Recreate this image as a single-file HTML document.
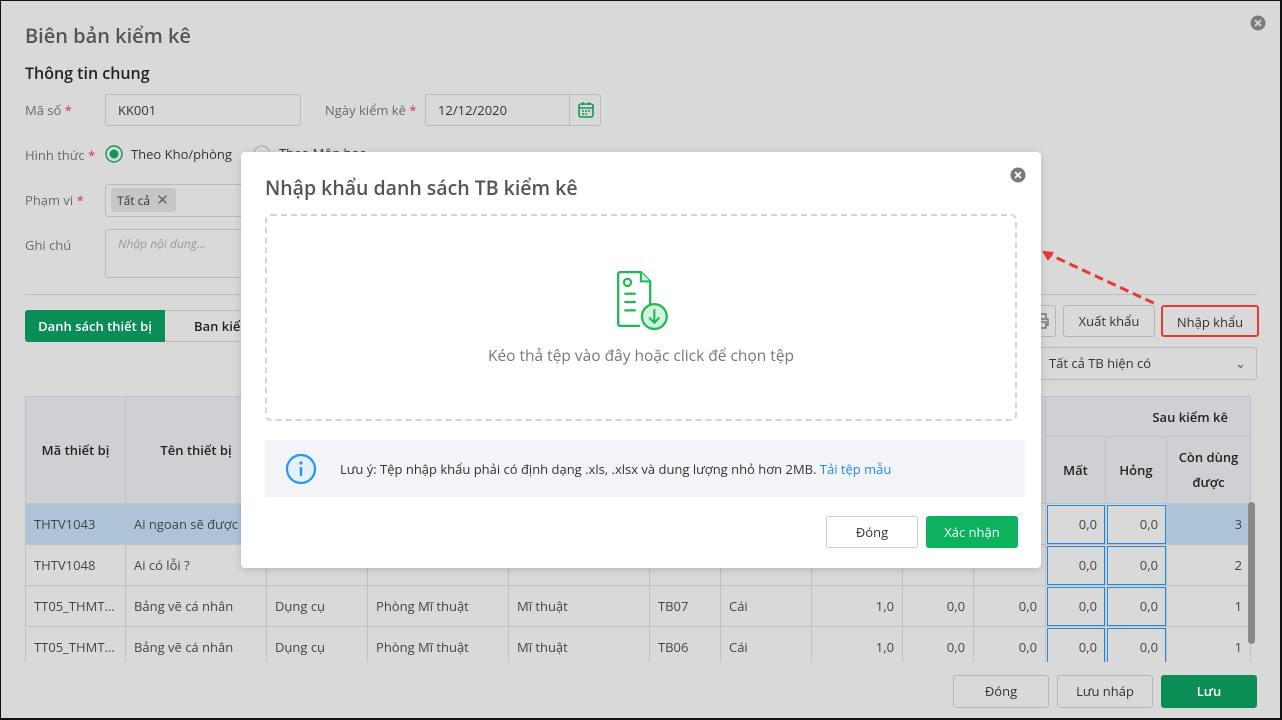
<!DOCTYPE html>
<html><head><meta charset="utf-8"><style>
*{box-sizing:border-box;margin:0;padding:0}
body{width:1282px;height:720px;overflow:hidden;background:#d9d9d9;font-family:"Open Sans","Liberation Sans","DejaVu Sans",sans-serif;font-size:13px;color:#333;position:relative}
.frame{position:absolute;left:0;top:0;width:1282px;height:720px;border:1px solid #111;border-right:2px solid #111;border-bottom:2px solid #111;pointer-events:none;z-index:50}
.a{position:absolute}
.lbl{color:#6a6a6a;font-size:13px}
.req{color:#d33}
.inp{position:absolute;border:1px solid #b9b9b9;border-radius:3px;background:#d9d9d9;padding:0 12px;line-height:30px;color:#333}
.btn{position:absolute;border:1px solid #b5b5b5;border-radius:3px;background:#d9d9d9;text-align:center;color:#333;font-size:13px}
table{border-collapse:collapse;position:absolute;left:25px;top:396px;table-layout:fixed}
td,th{border:1px solid #bfc1c9;padding:0 8px;height:41px;white-space:nowrap;overflow:hidden;font-size:13px}
th{background:#cfd0d4;font-weight:600;color:#222;text-align:center}
td{background:#d9d9d9;color:#444}
.num{text-align:right}
.blue{outline:1.5px solid #1e88e5;outline-offset:-2px}
</style></head><body>
<div class="frame"></div>

<div class="a" style="left:25px;top:22px;font-size:20px;font-weight:600;color:#555">Biên bản kiểm kê</div>
<div class="a" style="left:25px;top:62px;font-size:16px;font-weight:600;color:#222">Thông tin chung</div>
<svg class="a" style="left:1250px;top:15px" width="16" height="16"><circle cx="8" cy="8" r="7.5" fill="#7b7b7b"/><path d="M5 5L11 11M11 5L5 11" stroke="#d9d9d9" stroke-width="1.8"/></svg>

<div class="a lbl" style="left:25px;top:101px">Mã số <span class="req">*</span></div>
<div class="inp" style="left:105px;top:94px;width:196px;height:32px">KK001</div>
<div class="a lbl" style="left:325px;top:101px">Ngày kiểm kê <span class="req">*</span></div>
<div class="inp" style="left:425px;top:94px;width:176px;height:32px">12/12/2020</div>
<div class="a" style="left:569px;top:95px;width:1px;height:30px;background:#b9b9b9"></div>
<svg class="a" style="left:577px;top:101px" width="18" height="18"><rect x="2" y="3" width="14" height="13" rx="2" fill="none" stroke="#14955a" stroke-width="1.6"/><path d="M2 7H16M6 1V4M12 1V4M5 10H7M8 10H10M11 10H13M5 13H7M8 13H10" stroke="#14955a" stroke-width="1.4"/></svg>

<div class="a lbl" style="left:25px;top:146px">Hình thức <span class="req">*</span></div>
<svg class="a" style="left:105px;top:145px" width="18" height="18"><circle cx="9" cy="9" r="8" fill="none" stroke="#14955a" stroke-width="1.4"/><circle cx="9" cy="9" r="4.5" fill="#14955a"/></svg>
<div class="a" style="left:131px;top:145px;color:#333">Theo Kho/phòng</div>
<svg class="a" style="left:253px;top:145px" width="18" height="18"><circle cx="9" cy="9" r="8" fill="none" stroke="#aaa" stroke-width="1.2"/></svg>
<div class="a" style="left:279px;top:144px;color:#333">Theo Môn học</div>

<div class="a lbl" style="left:25px;top:191px">Phạm vi <span class="req">*</span></div>
<div class="inp" style="left:105px;top:184px;width:200px;height:33px"></div>
<div class="a" style="left:111px;top:188px;width:65px;height:24px;background:#c6c6c6;border-radius:3px;font-size:12px;line-height:24px;padding-left:6px;color:#333">Tất cả <span style="font-size:15px;color:#666;margin-left:3px">✕</span></div>
<div class="a lbl" style="left:25px;top:236px">Ghi chú</div>
<div class="inp" style="left:105px;top:229px;width:200px;height:49px;font-style:italic;color:#999;font-size:12px;line-height:28px">Nhập nội dung...</div>
<div class="a" style="left:25px;top:294px;width:1232px;height:1px;background:#bbb"></div>

<div class="a" style="left:25px;top:310px;width:140px;height:32px;background:#0b8e55;border-radius:3px 0 0 3px;color:#fff;font-weight:600;line-height:32px;text-align:center">Danh sách thiết bị</div>
<div class="a" style="left:165px;top:310px;width:120px;height:32px;border:1px solid #bbb;border-left:none;line-height:30px;padding-left:29px;color:#222;font-weight:600">Ban kiểm kê</div>

<div class="btn" style="left:1030px;top:305px;width:26px;height:32px"></div>
<svg class="a" style="left:1034px;top:312px" width="18" height="18"><path d="M5 6V2H12V6M4 13H2V7H14V13H12M5 10H12V16H5Z" fill="none" stroke="#777" stroke-width="1.4"/></svg>
<div class="btn" style="left:1063px;top:305px;width:92px;height:32px;line-height:30px">Xuất khẩu</div>
<div class="btn" style="left:1161px;top:305px;width:98px;height:32px;line-height:30px;border:2px solid #e53935">Nhập khẩu</div>
<div class="inp" style="left:1036px;top:347px;width:221px;height:33px;line-height:31px">Tất cả TB hiện có<span style="position:absolute;right:10px;top:0;color:#555">⌄</span></div>
<svg class="a" style="left:1040px;top:248px" width="125" height="62"><path d="M4 4L118 57" stroke="#e53935" stroke-width="3" stroke-dasharray="9 5"/><path d="M2 3L14 4L8 13Z" fill="#e53935"/></svg>

<table>
<colgroup><col style="width:100px"><col style="width:141px"><col style="width:101px"><col style="width:141px"><col style="width:141px"><col style="width:71px"><col style="width:91px"><col style="width:91px"><col style="width:71px"><col style="width:72px"><col style="width:60px"><col style="width:61px"><col style="width:84px"></colgroup>
<tr><th rowspan="2" style="height:107px">Mã thiết bị</th><th rowspan="2">Tên thiết bị</th><th rowspan="2"></th><th rowspan="2"></th><th rowspan="2"></th><th rowspan="2"></th><th rowspan="2"></th><th rowspan="2"></th><th rowspan="2"></th><th rowspan="2"></th><th colspan="3" style="height:40px;text-align:right;padding-right:22px;font-weight:600">Sau kiểm kê</th></tr>
<tr><th style="height:66px">Mất</th><th>Hỏng</th><th style="line-height:25px">Còn dùng<br>được</th></tr>
<tr><td style="background:#acc3d8">THTV1043</td><td style="background:#acc3d8">Ai ngoan sẽ được</td><td></td><td></td><td></td><td></td><td></td><td></td><td></td><td></td><td class="num blue">0,0</td><td class="num blue">0,0</td><td class="num" style="background:#acc3d8">3</td></tr>
<tr><td>THTV1048</td><td>Ai có lỗi ?</td><td></td><td></td><td></td><td></td><td></td><td></td><td></td><td></td><td class="num blue">0,0</td><td class="num blue">0,0</td><td class="num">2</td></tr>
<tr><td>TT05_THMT...</td><td>Bảng vẽ cá nhân</td><td>Dụng cụ</td><td>Phòng Mĩ thuật</td><td>Mĩ thuật</td><td>TB07</td><td>Cái</td><td class="num">1,0</td><td class="num">0,0</td><td class="num">0,0</td><td class="num blue">0,0</td><td class="num blue">0,0</td><td class="num">1</td></tr>
<tr><td style="height:38px">TT05_THMT...</td><td>Bảng vẽ cá nhân</td><td>Dụng cụ</td><td>Phòng Mĩ thuật</td><td>Mĩ thuật</td><td>TB06</td><td>Cái</td><td class="num">1,0</td><td class="num">0,0</td><td class="num">0,0</td><td class="num blue">0,0</td><td class="num blue">0,0</td><td class="num">1</td></tr>
</table>
<div class="a" style="left:1248px;top:502px;width:7px;height:142px;background:#8a8a8a;border-radius:4px"></div>
<div class="a" style="left:0;top:662px;width:1282px;height:58px;background:#d9d9d9"></div>

<div class="btn" style="left:953px;top:675px;width:96px;height:33px;line-height:31px">Đóng</div>
<div class="btn" style="left:1057px;top:675px;width:96px;height:33px;line-height:31px">Lưu nháp</div>
<div class="btn" style="left:1161px;top:675px;width:96px;height:33px;line-height:31px;background:#0b8e55;border-color:#0b8e55;color:#fff;font-weight:600">Lưu</div>

<!-- dialog -->
<div class="a" style="left:241px;top:152px;width:800px;height:416px;background:#fff;border-radius:4px;box-shadow:0 2px 8px rgba(0,0,0,.15)">
 <div class="a" style="left:24px;top:22px;font-size:19.5px;font-weight:600;color:#555">Nhập khẩu danh sách TB kiểm kê</div>
 <svg class="a" style="left:769px;top:15px" width="16" height="16"><circle cx="8" cy="8" r="7.5" fill="#7b7b7b"/><path d="M5 5L11 11M11 5L5 11" stroke="#fff" stroke-width="1.8"/></svg>
 <div class="a" style="left:24px;top:62px;width:752px;height:207px;border:2px dashed #d4d4d4;border-radius:6px"></div>
 <svg class="a" style="left:374px;top:117px" width="58" height="62" viewBox="0 0 56 60">
  <path d="M5 3H25L34 12V34M5 3Q3 3 3 5V53Q3 55 5 55H24" fill="none" stroke="#1db954" stroke-width="2.2"/>
  <path d="M25 3V12H34" fill="#d6f1e0" stroke="#1db954" stroke-width="2"/>
  <circle cx="12" cy="13" r="3.5" fill="none" stroke="#1db954" stroke-width="2"/>
  <path d="M9 24H20M9 32H20M9 40H20" stroke="#1db954" stroke-width="2.2"/>
  <circle cx="38" cy="46" r="12" fill="#d6f1e0" stroke="#1db954" stroke-width="2.2"/>
  <path d="M38 39V52M33 47L38 52L43 47" fill="none" stroke="#1db954" stroke-width="2"/>
 </svg>
 <div class="a" style="left:0;width:800px;top:192px;text-align:center;font-size:15.5px;color:#777">Kéo thả tệp vào đây hoặc click để chọn tệp</div>
 <div class="a" style="left:24px;top:288px;width:760px;height:57px;background:#f3f4f8"></div>
 <svg class="a" style="left:43px;top:300px" width="34" height="34"><circle cx="17" cy="17" r="14" fill="#e3f1fd" stroke="#2196f3" stroke-width="2.2"/><circle cx="17" cy="11" r="1.6" fill="#2196f3"/><path d="M17 15V24" stroke="#2196f3" stroke-width="2.4"/></svg>
 <div class="a" style="left:99px;top:308px;font-size:13px;color:#333">Lưu ý: Tệp nhập khẩu phải có định dạng .xls, .xlsx và dung lượng nhỏ hơn 2MB. <span style="color:#1e88e5">Tải tệp mẫu</span></div>
 <div class="btn" style="left:585px;top:364px;width:92px;height:32px;line-height:30px;background:#fff;border-color:#ccc">Đóng</div>
 <div class="btn" style="left:685px;top:364px;width:92px;height:32px;line-height:32px;background:#0db25f;border:none;color:#fff">Xác nhận</div>
</div>
</body></html>
